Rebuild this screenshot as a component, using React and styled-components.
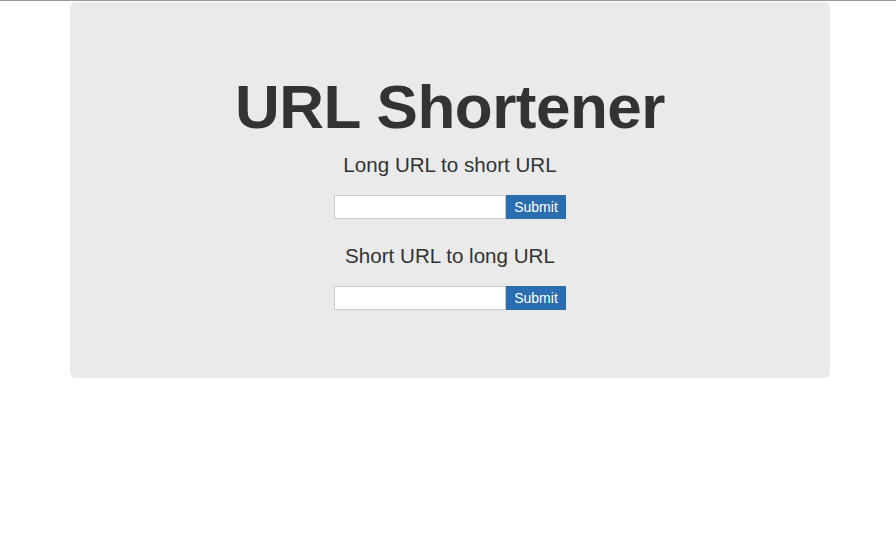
import styled, { createGlobalStyle } from 'styled-components';

const Global = createGlobalStyle`
  body {
    margin: 0;
    background: #fff;
    font-family: "Liberation Sans", Arial, sans-serif;
    color: #333;
  }
`;

const TopLine = styled.div`
  height: 1px;
  background: #9d93a3;
  margin-bottom: 1px;
`;

const Page = styled.div`
  padding-left: 70px;
`;

const Jumbotron = styled.div`
  width: 760px;
  height: 376px;
  box-sizing: border-box;
  background: #eaeaea;
  border-radius: 6px;
  display: flex;
  flex-direction: column;
  align-items: center;
  padding-top: 71px;
`;

const Title = styled.h1`
  margin: 0;
  font-size: 62px;
  font-weight: 700;
  letter-spacing: -0.5px;
  line-height: 1.1;
  color: #333;
`;

const Lead = styled.p`
  margin: ${p => p.$top}px 0 0;
  font-size: 20.6px;
  font-weight: 200;
  line-height: 1.4;
  color: #333;
`;

const Form = styled.form`
  display: flex;
  margin-top: 15px;
`;

const Input = styled.input`
  width: 172px;
  height: 24px;
  box-sizing: border-box;
  border: 1px solid #ccc;
  background: #fff;
  padding: 0 4px;
  margin: 0;
  outline: none;
`;

const Button = styled.button`
  height: 24px;
  width: 60px;
  box-sizing: border-box;
  border: 1px solid #2e6da4;
  background: #2a6db0;
  color: #fff;
  font-family: "Liberation Sans", Arial, sans-serif;
  font-size: 14px;
  padding: 0;
  margin: 0;
`;

export default function App() {
  return (
    <>
      <Global />
      <TopLine />
      <Page>
        <Jumbotron>
          <Title>URL Shortener</Title>
          <Lead $top={10}>Long URL to short URL</Lead>
          <Form onSubmit={e => e.preventDefault()}>
            <Input type="text" />
            <Button type="submit">Submit</Button>
          </Form>
          <Lead $top={23}>Short URL to long URL</Lead>
          <Form onSubmit={e => e.preventDefault()}>
            <Input type="text" />
            <Button type="submit">Submit</Button>
          </Form>
        </Jumbotron>
      </Page>
    </>
  );
}
